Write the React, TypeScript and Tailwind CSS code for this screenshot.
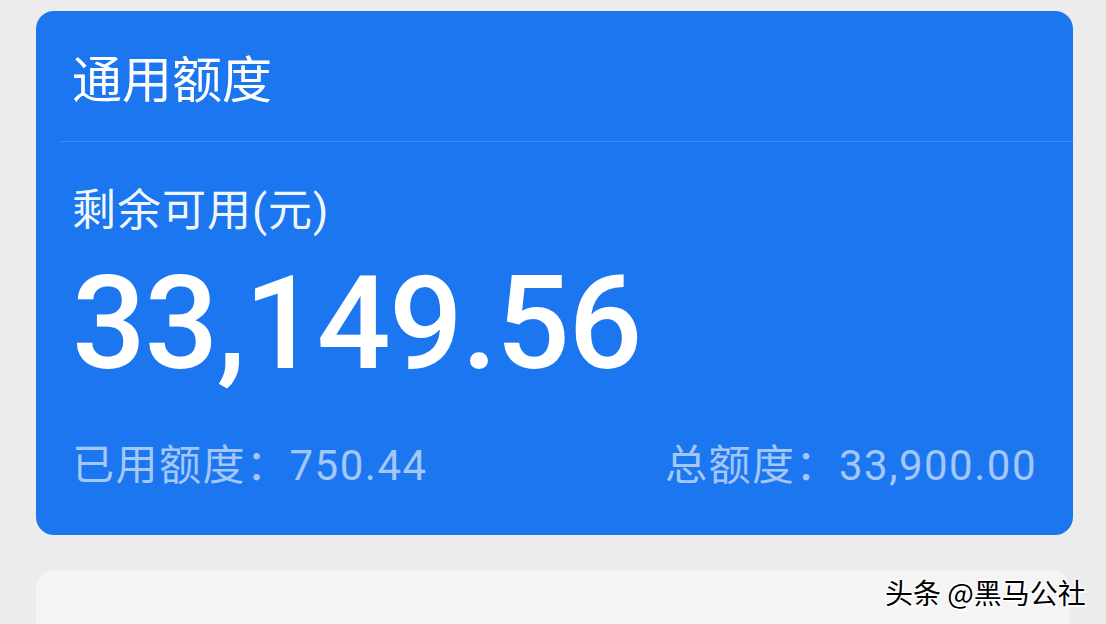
import React from "react";

// credit summary card
const cjk = '"Noto Sans CJK SC", sans-serif';
const num = 'Roboto, "Noto Sans CJK SC", sans-serif';

const App: React.FC = () => {
  return (
    <div className="relative h-[624px] w-full overflow-hidden bg-[#ececec] pt-[11px]">
      <div className="ml-[36px] w-[1037px] rounded-[18px] bg-[#1b76f0]">
        {/* header */}
        <div className="flex h-[130px] items-center px-[36px]">
          <span className="text-[50px] font-normal leading-none text-white" style={{ fontFamily: cjk }}>
            通用额度
          </span>
        </div>
        <div className="ml-[24px] h-px bg-white/15" />

        <div className="px-[36px] pb-[48px] pt-[47px]">
          <div className="text-[44px] leading-none tracking-[1px] text-white/95" style={{ fontFamily: num }}>
            剩余可用(元)
          </div>
          <div
            className="mt-[26px] text-[130px] font-medium leading-none tracking-[-1.5px] text-white"
            style={{ fontFamily: num }}
          >
            33,149.56
          </div>
          <div
            className="mt-[56px] flex items-center justify-between text-[42px] leading-none tracking-[1.5px] text-white/60"
            style={{ fontFamily: num }}
          >
            <span>已用额度：750.44</span>
            <span>总额度：33,900.00</span>
          </div>
        </div>
      </div>

      {/* next card, cut off by the bottom edge */}
      <div className="ml-[36px] mt-[35px] h-[120px] w-[1034px] rounded-[18px] bg-[#f4f4f4]" />

      {/* watermark */}
      <div
        className="absolute left-[885px] top-[578px] text-[28px] leading-none text-black [text-shadow:1px_1px_0_#fff,-1px_-1px_0_#fff,1px_-1px_0_#fff,-1px_1px_0_#fff,2px_2px_1px_#fff]"
        style={{ fontFamily: cjk }}
      >
        头条 @黑马公社
      </div>
    </div>
  );
};

export default App;
